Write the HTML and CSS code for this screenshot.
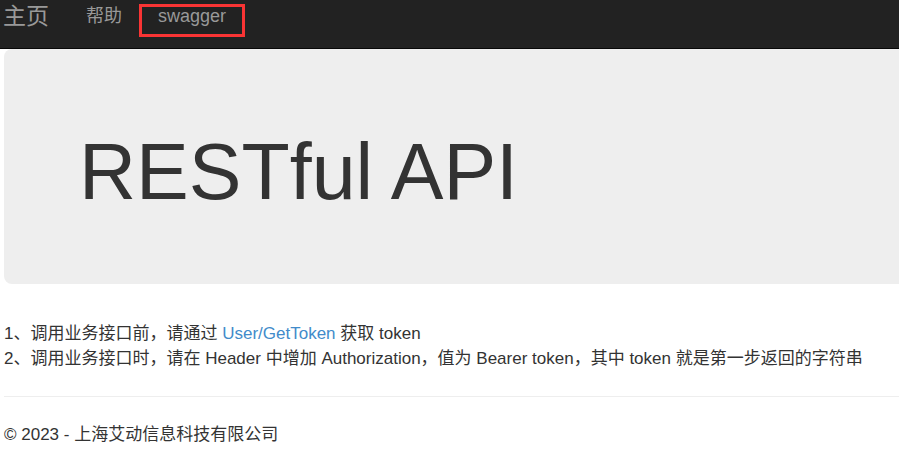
FILE: index.html
```html
<!DOCTYPE html>
<html lang="zh-CN">
<head>
<meta charset="utf-8">
<title>RESTful API</title>
<link rel="stylesheet" href="styles.css">
</head>
<body>
<nav class="navbar">
  <a class="brand" href="#">主页</a>
  <a class="nav-link" href="#">帮助</a>
  <a class="nav-link marked" href="#">swagger</a>
</nav>
<main class="content">
  <section class="jumbotron"><h1>RESTful API</h1></section>
  <div class="steps">
    <p>1、调用业务接口前，请通过 <a href="#">User/GetToken</a> 获取 token</p>
    <p>2、调用业务接口时，请在 Header 中增加 Authorization，值为 Bearer token，其中 token 就是第一步返回的字符串</p>
  </div>
  <hr>
  <footer>© 2023 - 上海艾动信息科技有限公司</footer>
</main>
</body>
</html>
```
FILE: styles.css
```css
* { box-sizing: border-box; }
body {
  margin: 0;
  background: #fff;
  color: #333;
  font: 17px/25px "Liberation Sans", "Noto Sans CJK SC", sans-serif;
}
a { color: #428bca; text-decoration: none; }
.navbar {
  display: flex;
  align-items: flex-start;
  height: 49px;
  padding: 4px 3px;
  background: #222;
  border-bottom: 1px solid #080808;
}
.navbar a { color: #999; }
.brand { font-size: 23px; margin-right: 18px; }
.nav-link {
  height: 33px;
  padding: 0 16px;
  border: 3px solid transparent;
  font-size: 18px;
  line-height: 18px;
}
.nav-link.marked { border-color: #f93434; }
.nav-link:not(.marked) { padding-right: 14px; }
.content { padding-left: 4px; }
.jumbotron {
  padding: 80px 75px 70px;
  background: #eee;
  border-radius: 8px 0 0 8px;
}
h1 {
  margin: 0;
  font-size: 79px;
  font-weight: 500;
  line-height: 85px;
}
.steps { margin-top: 37px; }
p { margin: 0; }
hr {
  height: 1px;
  margin: 25px 0;
  border: 0;
  background: #eee;
}
```
